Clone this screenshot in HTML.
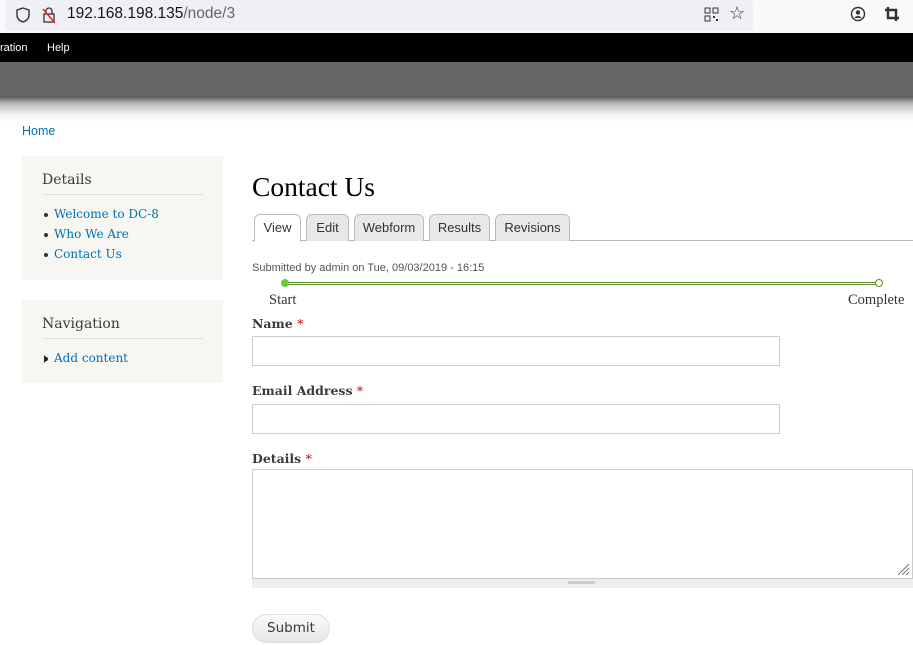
<!DOCTYPE html>
<html><head><meta charset="utf-8"><style>
*{margin:0;padding:0;box-sizing:border-box}
body{width:913px;height:645px;position:relative;overflow:hidden;background:#fff;font-family:"Liberation Sans",sans-serif}
.a{position:absolute}
.blk{background:#f6f6f2;left:22px;width:201px}
.blk h2{font-weight:normal;font-size:14px;color:#3b3b3b;margin:16px 20px 0 20px;padding-bottom:6px;border-bottom:1px solid #e0e0d8;font-family:"DejaVu Serif",serif}
.blk ul{list-style:none;margin:12px 0 0 22px;font-size:12px;font-family:"DejaVu Serif",serif}
.blk li{height:20px;color:#0071b3}
.blk li::before{content:"";display:inline-block;width:4px;height:4px;background:#333;border-radius:50%;margin-right:6px;vertical-align:middle}
.tab{position:absolute;top:214px;height:27px;border:1px solid #bbb;border-bottom:none;border-radius:6px 6px 0 0;background:#e8e8e8;font-size:13px;color:#333;text-align:center;line-height:25px}
.lbl{font-family:"DejaVu Serif",serif;font-weight:bold;font-size:12.5px;color:#3b3b3b}
.lbl b{color:#c00;font-weight:normal}
.inp{border:1px solid #ccc;background:#fff}
</style></head><body>
<div class="a" style="left:0;top:0;width:913px;height:33px;background:#f9f9fb"></div>
<div class="a" style="left:5px;top:0;width:748px;height:31px;background:#f0f0f4;border-radius:4px"></div>
<svg class="a" style="left:14px;top:6px" width="18" height="18"><path d="M9 2 L15 4 V9 C15 13 12 15 9 16 C6 15 3 13 3 9 V4 Z" fill="none" stroke="#333" stroke-width="1.4"/></svg>
<svg class="a" style="left:40px;top:5px" width="18" height="20"><rect x="4" y="9" width="10" height="8" fill="none" stroke="#333" stroke-width="1.3"/><path d="M6 9 V6 a3 3 0 0 1 6 0 V9" fill="none" stroke="#333" stroke-width="1.3"/><path d="M3 4 L15 18" stroke="#e22" stroke-width="1.5"/></svg>
<div class="a" style="left:67px;top:5px;font-size:15.5px;color:#15141a">192.168.198.135<span style="color:#666">/node/3</span></div>
<svg class="a" style="left:704px;top:7px" width="15" height="15"><rect x="1" y="1" width="5" height="5" fill="none" stroke="#333"/><rect x="9" y="1" width="5" height="5" fill="none" stroke="#333"/><rect x="1" y="9" width="5" height="5" fill="none" stroke="#333"/><rect x="9" y="9" width="2" height="2" fill="#333"/><rect x="12" y="12" width="2" height="2" fill="#333"/></svg>
<div class="a" style="left:729px;top:3px;font-size:18px;color:#333">☆</div>
<svg class="a" style="left:850px;top:6px" width="16" height="16"><circle cx="8" cy="8" r="6.5" fill="none" stroke="#333" stroke-width="1.4"/><circle cx="8" cy="6.5" r="2.2" fill="#333"/><path d="M4 12 Q8 8 12 12" fill="#333"/></svg>
<svg class="a" style="left:884px;top:6px" width="16" height="16"><path d="M4 1 V12 H15 M1 4 H12 V15" fill="none" stroke="#333" stroke-width="2.5"/></svg>
<div class="a" style="left:0;top:33px;width:913px;height:29px;background:#000"></div>
<div class="a" style="left:0;top:42px;font-size:11px;color:#fff">ration</div>
<div class="a" style="left:47px;top:42px;font-size:11px;color:#fff">Help</div>
<div class="a" style="left:0;top:62px;width:913px;height:35px;background:#666"></div>
<div class="a" style="left:0;top:96px;width:913px;height:26px;background:linear-gradient(#555,#bbb 30%,#f2f2f2 70%,#fff)"></div>
<div class="a" style="left:22px;top:124px;font-size:12.5px;color:#0071b3">Home</div>
<div class="a blk" style="top:156px;height:124px"><h2>Details</h2><ul><li>Welcome to DC-8</li><li>Who We Are</li><li>Contact Us</li></ul></div>
<div class="a blk" style="top:300px;height:83px"><h2>Navigation</h2><ul><li style="list-style:none">Add content</li></ul></div>
<div class="a" style="left:44px;top:355px;width:0;height:0;border-left:4px solid #222;border-top:4px solid transparent;border-bottom:4px solid transparent"></div>
<div class="a" style="left:252px;top:171px;color:#000;font-family:'Liberation Serif',serif;font-size:27.5px">Contact Us</div>
<div class="a" style="left:252px;top:240px;width:661px;height:1px;background:#bbb"></div>
<div class="tab" style="left:254px;width:47px;background:#fff;height:28px">View</div>
<div class="tab" style="left:306px;width:43px">Edit</div>
<div class="tab" style="left:354px;width:70px">Webform</div>
<div class="tab" style="left:429px;width:61px">Results</div>
<div class="tab" style="left:495px;width:75px">Revisions</div>
<div class="a" style="left:252px;top:262px;font-size:11px;color:#555">Submitted by admin on Tue, 09/03/2019 - 16:15</div>
<div class="a" style="left:285px;top:282px;width:594px;height:3px;border:1px solid #5a8a2a;background:#fff"></div>
<div class="a" style="left:281px;top:279px;width:8px;height:8px;border-radius:50%;background:#6c3"></div>
<div class="a" style="left:875px;top:279px;width:8px;height:8px;border-radius:50%;background:#fff;border:1px solid #5a8a2a"></div>
<div class="a" style="left:269px;top:292px;font-size:14.5px;color:#333;font-family:'Liberation Serif',serif">Start</div>
<div class="a" style="left:848px;top:292px;font-size:14.5px;color:#333;font-family:'Liberation Serif',serif">Complete</div>
<div class="a lbl" style="left:252px;top:316px">Name <b>*</b></div>
<div class="a inp" style="left:252px;top:336px;width:528px;height:30px"></div>
<div class="a lbl" style="left:252px;top:383px">Email Address <b>*</b></div>
<div class="a inp" style="left:252px;top:404px;width:528px;height:30px"></div>
<div class="a lbl" style="left:252px;top:451px">Details <b>*</b></div>
<div class="a inp" style="left:252px;top:469px;width:661px;height:110px"></div>
<svg class="a" style="left:896px;top:562px" width="14" height="14"><path d="M2 13 L13 2 M6 13 L13 6 M10 13 L13 10" stroke="#777" stroke-width="1"/></svg>
<div class="a" style="left:252px;top:578px;width:661px;height:10px;background:#eee;border-top:1px solid #ccc"></div>
<div class="a" style="left:568px;top:581px;width:27px;height:3px;background:#ccc"></div>
<div class="a" style="left:252px;top:614px;width:78px;height:29px;border-radius:15px;background:linear-gradient(#fafafa,#e6e6e6);border:1px solid #ddd;font-size:13.5px;color:#3a3a3a;text-align:center;line-height:27px;font-family:'DejaVu Sans',sans-serif">Submit</div>
</body></html>
